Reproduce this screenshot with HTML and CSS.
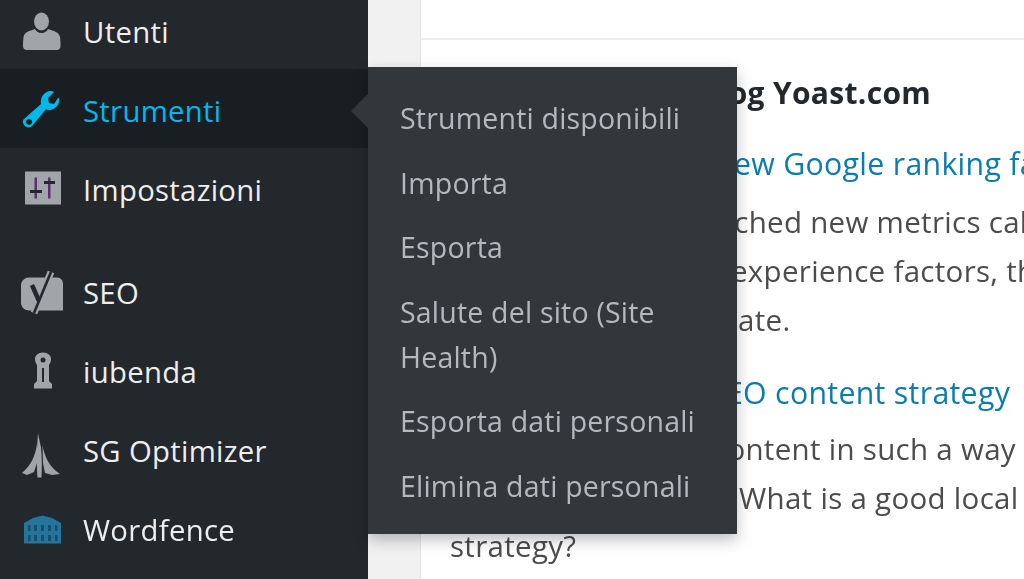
FILE: index.html
```html
<!DOCTYPE html>
<html lang="it">
<head>
<meta charset="utf-8">
<title>Strumenti</title>
<link rel="stylesheet" href="styles.css">
</head>
<body>
<div class="app">
  <nav class="sidebar">
    <a class="item"><svg class="icon" viewBox="0 0 40 40"><ellipse cx="20.500" cy="11.500" rx="7.500" ry="9"/><path d="M14 19c1 2 3 4 6.500 4s5.500-2 6.500-4c6 2 11 3 12 8 .5 3 .5 6 .5 9 0 2-1 4-4 4H6c-3 0-4-2-4-4 0-3 0-6 .5-9 1-5 5.500-6 11.500-8z"/></svg><span>Utenti</span></a>
    <a class="item active"><svg class="icon" viewBox="0 0 40 40"><path fill-rule="evenodd" d="M38 9c1 6-3 11-9 12-2 0-3 0-4-1L12 36c-2 3-6 3-8 1s-3-5-1-7l17-15c-1-7 3-12 9-13 2 0 3 0 4 1l-6 6 1 5 5 1 4-6c1 0 1 0 1 0zM8 30a3 3 0 1 0 .1 0z"/></svg><span>Strumenti</span></a>
    <a class="item"><svg class="icon" viewBox="0 0 40 40"><path d="M4 3.500h36v33H4z"/><path class="violet" d="M13.500 9.500h2.500v21h-2.500zM27 9.500h2.500v21H27z"/><path class="mark" d="M9 22h12v3H9zM23 13h11v3H23z"/></svg><span>Impostazioni</span></a>
    <a class="item sep"><svg class="icon seo" viewBox="0 0 44 48"><path d="M9 10.500h28c4 0 6 3 6 7v26H9c-4 0-8-3-8-8V18c0-4 4-7.500 8-7.500z"/><path class="halo" d="M31 5 14 46"/><path class="ystroke" d="M31 5 14 46"/><path class="yarm" d="M12 18l7 16"/></svg><span>SEO</span></a>
    <a class="item"><svg class="icon" viewBox="0 0 40 40"><path d="M22 2.500c5 0 8 3 8 6.500 0 3-1 4-2 6v16l3 3v4.500H13V34l3-3V15c-1-2-2-3-2-6 0-3.500 3-6.500 8-6.500z"/><path class="mark" d="M21 18h2v14h-2z"/><circle class="mark" cx="22" cy="10" r="2.500"/></svg><span>iubenda</span></a>
    <a class="item"><svg class="icon sg" viewBox="0 0 40 40"><path d="M16 15C14 28 10 36 1 44l5 2 7-3 3-9z"/><path d="M17 4.500l3 14c1 10 1 20 .5 30h-4c-1-12-1-27 .5-44z"/><path d="M21.500 16c2 12 7 22 17.500 29l-8 1-7-2-2-10z"/></svg><span>SG Optimizer</span></a>
    <a class="item fence"><svg class="icon" viewBox="0 0 40 40"><path d="M3 15 12 10l9.500-2.500L31 10l9 5v20.500H3z"/><path class="windows" d="M7 17v6h2.500v-6zm6 0v6h3v-6zm7 0v6h3v-6zm7 0v6h3v-6zm7 0v6h2.500v-6zM7 27v6h2.500v-6zm6 0v6h3v-6zm7 0v6h3v-6zm7 0v6h3v-6zm7 0v6h2.500v-6z"/></svg><span>Wordfence</span></a>
  </nav>
  <div class="gutter"></div>
  <main class="content">
    <div class="card-top"></div>
    <section class="card">
      <h2 class="title line"><span class="lead w-title">Ultimi articoli dal</span>blog Yoast.com</h2>
      <p class="link line"><span class="lead w-link1">Core Web Vitals: a</span>new Google ranking factors</p>
      <div class="para first">
        <p class="line"><span class="lead w-p1">Google has</span>launched new metrics called</p>
        <p class="line"><span class="lead w-p2">Core Web Vitals: user</span>experience factors, that</p>
        <p class="line"><span class="lead w-p3">you should</span>update.</p>
      </div>
      <p class="link second line"><span class="lead w-link2">How to build a local</span>SEO content strategy</p>
      <div class="para second-para">
        <p class="line"><span class="lead w-p4">Writing your</span>content in such a way</p>
        <p class="line"><span class="lead w-p5">that it ranks locally.</span>What is a good local</p>
        <p class="line">strategy?</p>
      </div>
    </section>
  </main>
  <div class="flyout">
    <a>Strumenti disponibili</a>
    <a>Importa</a>
    <a>Esporta</a>
    <a>Salute del sito (Site Health)</a>
    <a>Esporta dati personali</a>
    <a>Elimina dati personali</a>
  </div>
</div>
</body>
</html>
```

FILE: styles.css
```css
html, body { margin: 0; padding: 0; height: 100%; overflow: hidden; }
body { background: #f1f1f1; font-family: "Open Sans", "Noto Sans", sans-serif; }
.app { position: relative; display: flex; height: 579px; width: 1024px; overflow: hidden; filter: blur(0.7px); }
.sidebar { width: 368px; flex: none; background: #23282d; display: flex; flex-direction: column; margin-top: -10px; height: 589px; box-sizing: border-box; }
.item { display: flex; align-items: center; height: 79px; flex: none; color: #eeeeee; font-size: 29.300px; letter-spacing: .3px; padding-left: 21px; gap: 22px; box-sizing: border-box; }
.item span { padding-top: 5px; }
.item.active { background: #191e23; color: #00b9eb; }
.item.sep { margin-top: 24px; }
.icon { width: 40px; height: 40px; fill: #a0a5aa; flex: none; overflow: visible; }
.icon .mark { fill: #23282d; }
.icon .violet { fill: #5b2f6e; }
.icon .windows { fill: #1a4d68; }
.icon.seo { width: 44px; height: 48px; margin: 0 -3px 0 -1px; }
.halo { fill: none; stroke: #a0a5aa; stroke-width: 7; }
.ystroke { fill: none; stroke: #23282d; stroke-width: 2.600px; }
.yarm { fill: none; stroke: #23282d; stroke-width: 4.500px; }
.item.active .icon { fill: #00b9eb; }
.fence .icon { fill: #24749c; }
.gutter { width: 52px; flex: none; border-right: 1px solid #e2e4e7; }
.content { flex: 1; min-width: 0; display: flex; flex-direction: column; background: #fff; }
.card-top { height: 38px; border-bottom: 2px solid #eeeeee; flex: none; }
.card { padding: 33px 0 0 29px; white-space: nowrap; overflow: hidden; color: #4c4c4c; font-size: 29.500px; letter-spacing: .3px; }
.card p { margin: 0; }
.line { display: flex; }
.lead { flex: none; overflow: hidden; }
.w-title { width: 250px; }
.w-link1 { width: 265px; }
.w-p1 { width: 223px; }
.w-p2 { width: 281px; }
.w-p3 { width: 233px; }
.w-link2 { width: 259px; }
.w-p4 { width: 263px; }
.w-p5 { width: 289px; }
.title { margin: 0; font-size: 30px; font-weight: 700; color: #23282d; line-height: 40px; }
.card .link { margin-top: 31px; color: #0a7cb0; line-height: 40px; font-size: 30.300px; }
.card .link.second { margin-top: 29px; }
.para { line-height: 49px; }
.para.first { margin-top: 13px; }
.para.second-para { margin-top: 12px; line-height: 48.600px; }
.flyout { position: absolute; left: 368px; top: 67px; width: 369px; height: 467px; background: #32373c; box-shadow: 0 6px 14px rgba(0,0,0,.25); padding: 29px 32px 0; box-sizing: border-box; display: flex; flex-direction: column; gap: 19.500px; color: #b4b9be; font-size: 28.500px; letter-spacing: .2px; line-height: 45px; }
.flyout::before { content: ""; position: absolute; left: -17px; top: 27px; border: 17px solid transparent; border-left-width: 0; border-right-color: #32373c; }
```
